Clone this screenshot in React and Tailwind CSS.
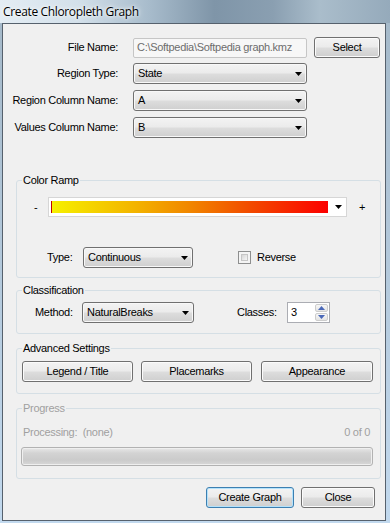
import React from "react";

const btnBg =
  "bg-[linear-gradient(to_bottom,#f3f3f3_0%,#ebebeb_48%,#dddddd_52%,#cfcfcf_100%)]";

const Arrow = () => (
  <svg width="7" height="4" viewBox="0 0 7 4">
    <path d="M0 0h7L3.5 4z" fill="#000" />
  </svg>
);

function Combo({ className, value }) {
  return (
    <div
      className={`${className} h-[21px] flex items-center justify-between pl-[4px] pr-[4px] rounded-[3px] border border-[#707070] ${btnBg} shadow-[inset_0_0_0_1px_#f8f8f8]`}
    >
      <span>{value}</span>
      <Arrow />
    </div>
  );
}

function Btn({ className, children, def }) {
  return (
    <button
      className={`${className} h-[21px] flex items-center justify-center rounded-[3px] border ${
        def
          ? "border-[#3c7fb1] shadow-[inset_0_0_0_1px_#b4e2fb]"
          : "border-[#707070] shadow-[inset_0_0_0_1px_#fbfbfb]"
      } ${btnBg}`}
    >
      {children}
    </button>
  );
}

function Group({ title, className, disabled, children }) {
  return (
    <fieldset
      className={`${className} ml-[13px] w-[365px] rounded-[3px] border border-[#d5dfe5]`}
    >
      <legend
        className={`ml-[5px] px-[1px] leading-[14px] ${
          disabled ? "text-[#a0a0a0]" : "text-black"
        }`}
      >
        {title}
      </legend>
      {children}
    </fieldset>
  );
}

const SpinTri = ({ up }) => (
  <svg width="7" height="4" viewBox="0 0 7 4">
    <path d={up ? "M0 4h7L3.5 0z" : "M0 0h7L3.5 4z"} fill="#4a68b8" />
  </svg>
);

export default function App() {
  return (
    <div className="w-[390px] h-[523px] bg-[linear-gradient(to_bottom,#a4b8c8,#c2d9ee)] font-['Liberation_Sans',Arial,sans-serif] text-[11px] tracking-[-0.3px] text-black">
      <div className="h-[23px] pl-[3px] flex items-center bg-[linear-gradient(to_right,#e4edf4_0%,#d3e0ea_20%,#a8bccc_38%,#7f95a8_55%,#8a9fb1_70%,#aabdcb_82%,#95aabb_100%)]">
        <span className="font-['Open_Sans',sans-serif] text-[12px] tracking-[-0.35px] [text-shadow:0_0_6px_#fff,0_0_3px_#fff]">
          Create Chloropleth Graph
        </span>
      </div>

      <div className="ml-[2px] w-[384px] h-[498px] border border-[#56616d] bg-[#f0f0f0] pt-[13px]">
        {/* file + columns */}
        <div className="flex items-center h-[21px]">
          <span className="w-[115px] text-right">File Name:</span>
          <div className="ml-[15px] w-[174px] h-[20px] rounded-[2px] border border-[#c6c6c6] bg-[#f7f7f7] pl-[3px] flex items-center text-[#6d6d6d]">
            C:\Softpedia\Softpedia graph.kmz
          </div>
          <Btn className="ml-[7px] w-[66px]">Select</Btn>
        </div>
        <div className="mt-[5px] flex items-center">
          <span className="w-[115px] text-right">Region Type:</span>
          <Combo className="ml-[15px] w-[174px]" value="State" />
        </div>
        <div className="mt-[6px] flex items-center">
          <span className="w-[115px] text-right">Region Column Name:</span>
          <Combo className="ml-[15px] w-[174px]" value="A" />
        </div>
        <div className="mt-[6px] flex items-center">
          <span className="w-[115px] text-right">Values Column Name:</span>
          <Combo className="ml-[15px] w-[174px]" value="B" />
        </div>

        <Group title="Color Ramp" className="mt-[35px] pt-[10px] pb-[9px]">
          <div className="flex items-center h-[20px]">
            <span className="ml-[17px] w-[14px]">-</span>
            <div className="w-[299px] h-[20px] border border-[#d6d6d6] bg-white flex items-center pl-[2px] pr-[4px]">
              <div className="w-[277px] h-[12px] border-l border-[#c00000] bg-[linear-gradient(to_right,#f6f000_0%,#f3b400_30%,#f18600_50%,#f24a00_72%,#fc0000_100%)]" />
              <div className="ml-auto">
                <Arrow />
              </div>
            </div>
            <span className="ml-[12px]">+</span>
          </div>
          <div className="mt-[30px] flex items-center h-[21px]">
            <span className="ml-[30px] w-[36px]">Type:</span>
            <Combo className="w-[110px]" value="Continuous" />
            <div className="ml-[45px] w-[13px] h-[13px] border border-[#8e8f8f] bg-[#f4f4f4] p-[2px]">
              <div className="w-full h-full border border-[#c6c6c6] bg-[linear-gradient(135deg,#d6d6d6,#f6f6f6)]" />
            </div>
            <span className="ml-[6px]">Reverse</span>
          </div>
        </Group>

        <Group title="Classification" className="mt-[5px] pt-[5px] pb-[10px]">
          <div className="flex items-center h-[21px]">
            <span className="ml-[18px] w-[47px]">Method:</span>
            <Combo className="w-[112px]" value="NaturalBreaks" />
            <span className="ml-[43px] w-[50px]">Classes:</span>
            <div className="w-[43px] h-[21px] border border-[#abadb3] bg-white flex">
              <span className="flex-1 pl-[3px] leading-[19px]">3</span>
              <div className="w-[15px] flex flex-col p-[1px] gap-[1px]">
                <div className="flex-1 rounded-[2px] border border-[#cdcdcd] bg-[linear-gradient(to_bottom,#f7f7f7,#e4e4e4)] flex items-center justify-center">
                  <SpinTri up />
                </div>
                <div className="flex-1 rounded-[2px] border border-[#cdcdcd] bg-[linear-gradient(to_bottom,#f7f7f7,#e4e4e4)] flex items-center justify-center">
                  <SpinTri />
                </div>
              </div>
            </div>
          </div>
        </Group>

        <Group title="Advanced Settings" className="mt-[7px] pt-[6px] pb-[11px]">
          <div className="flex">
            <Btn className="ml-[5px] w-[111px]">Legend / Title</Btn>
            <Btn className="ml-[8px] w-[111px]">Placemarks</Btn>
            <Btn className="ml-[9px] w-[112px]">Appearance</Btn>
          </div>
        </Group>

        <Group title="Progress" disabled className="mt-[7px] pt-[10px] pb-[12px]">
          <div className="flex justify-between leading-[14px] text-[#a0a0a0] pl-[6px] pr-[10px]">
            <span className="whitespace-pre">Processing:  (none)</span>
            <span>0 of 0</span>
          </div>
          <div className="mt-[8px] ml-[4px] w-[352px] h-[19px] rounded-[3px] border border-[#b2b2b2] bg-[linear-gradient(to_bottom,#e8e8e8,#d3d3d3_30%,#cbcbcb_70%,#d8d8d8)] shadow-[inset_0_0_0_1px_#efefef]" />
        </Group>

        <div className="mt-[8px] flex">
          <Btn def className="ml-[203px] w-[88px]">
            Create Graph
          </Btn>
          <Btn className="ml-[7px] w-[74px]">Close</Btn>
        </div>
      </div>
    </div>
  );
}
